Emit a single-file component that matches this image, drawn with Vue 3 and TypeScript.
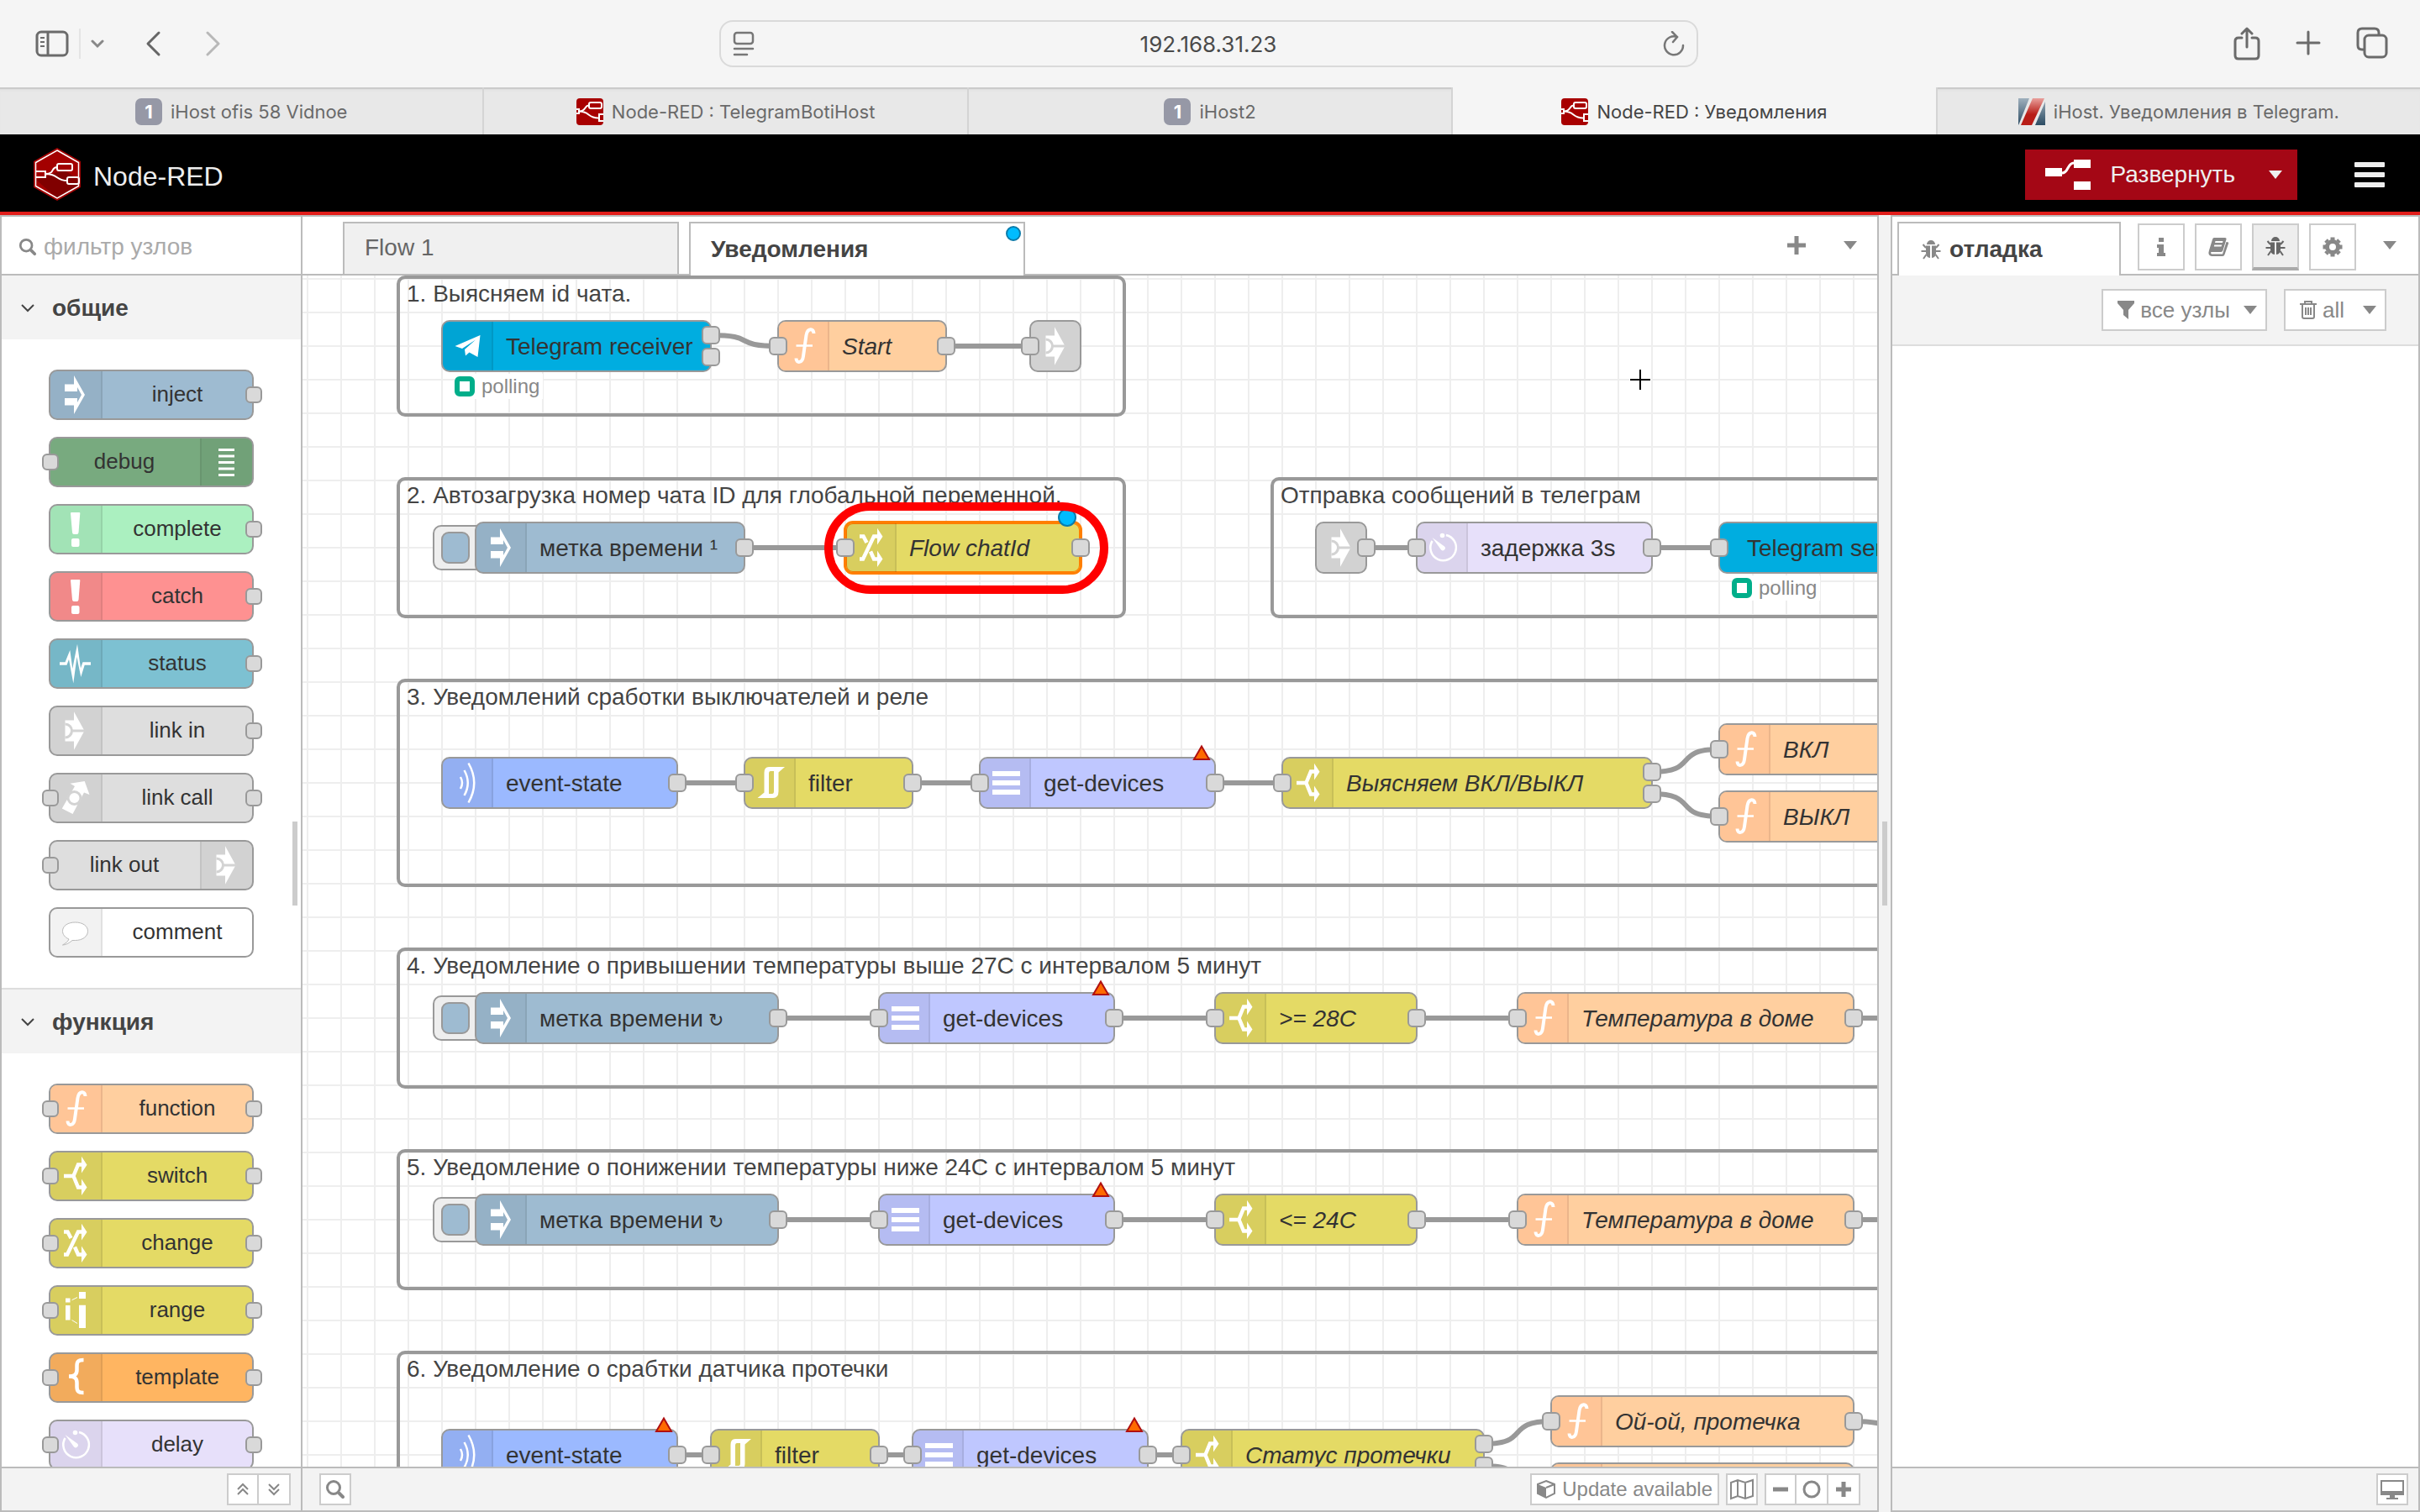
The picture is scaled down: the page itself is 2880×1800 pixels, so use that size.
<script setup lang="ts">
interface BrowserTab {
  title: string
  icon: 'one' | 'red' | 'stripe'
  active?: boolean
}

interface PaletteNode {
  label: string
  icon: string
  kind: string
  input?: boolean
  output?: boolean
  right?: boolean
}

interface Category {
  title: string
  nodes: PaletteNode[]
}

// Positions and spans are counted in grid cells.
interface FlowNode {
  label: string
  mark?: string
  icon?: string
  kind: string
  col: number
  row: number
  span: number
  inputs: number
  outputs: number
  italic?: boolean
  button?: boolean
  error?: boolean
  selected?: boolean
  changed?: boolean
  status?: string
  bare?: boolean
}

interface Group {
  label: string
  left: number
  top: number
  width: number
  height: number
}

const CELL = 40
const ORIGIN_X = 6
const ORIGIN_Y = 4

const browserTabs: BrowserTab[] = [
  { title: 'iHost ofis 58 Vidnoe', icon: 'one' },
  { title: 'Node-RED : TelegramBotiHost', icon: 'red' },
  { title: 'iHost2', icon: 'one' },
  { title: 'Node-RED : Уведомления', icon: 'red', active: true },
  { title: 'iHost. Уведомления в Telegram.', icon: 'stripe' },
]

const categories: Category[] = [
  {
    title: 'общие',
    nodes: [
      { label: 'inject', icon: 'inject', kind: 'inject', output: true },
      { label: 'debug', icon: 'debug', kind: 'debug', input: true, right: true },
      { label: 'complete', icon: 'alert', kind: 'complete', output: true },
      { label: 'catch', icon: 'alert', kind: 'catch', output: true },
      { label: 'status', icon: 'status', kind: 'status', output: true },
      { label: 'link in', icon: 'link', kind: 'link', output: true },
      { label: 'link call', icon: 'linkcall', kind: 'link', input: true, output: true },
      { label: 'link out', icon: 'link', kind: 'link', input: true, right: true },
      { label: 'comment', icon: 'comment', kind: 'comment' },
    ],
  },
  {
    title: 'функция',
    nodes: [
      { label: 'function', icon: 'function', kind: 'function', input: true, output: true },
      { label: 'switch', icon: 'switch', kind: 'logic', input: true, output: true },
      { label: 'change', icon: 'change', kind: 'logic', input: true, output: true },
      { label: 'range', icon: 'range', kind: 'logic', input: true, output: true },
      { label: 'template', icon: 'template', kind: 'template', input: true, output: true },
      { label: 'delay', icon: 'delay', kind: 'delay', input: true, output: true },
    ],
  },
]

const groups: Group[] = [
  { label: '1. Выясняем id чата.', left: 112, top: 0, width: 868, height: 168 },
  { label: '2. Автозагрузка номер чата ID для глобальной переменной.', left: 112, top: 240, width: 868, height: 168 },
  { label: 'Отправка сообщений в телеграм', left: 1152, top: 240, width: 920, height: 168 },
  { label: '3. Уведомлений сработки выключателей и реле', left: 112, top: 480, width: 2400, height: 248 },
  { label: '4. Уведомление о привышении температуры выше 27С с интервалом 5 минут', left: 112, top: 800, width: 2400, height: 168 },
  { label: '5. Уведомление о понижении температуры ниже 24С с интервалом 5 минут', left: 112, top: 1040, width: 2400, height: 168 },
  { label: '6. Уведомление о срабтки датчика протечки', left: 112, top: 1280, width: 2400, height: 248 },
]

const nodes: FlowNode[] = [
  { label: 'Telegram receiver', icon: 'telegram', kind: 'telegram', col: 4, row: 2, span: 8, inputs: 0, outputs: 2, status: 'polling' },
  { label: 'Start', icon: 'function', kind: 'function', col: 14, row: 2, span: 5, inputs: 1, outputs: 1, italic: true },
  { label: '', icon: 'link', kind: 'link', col: 21.5, row: 2, span: 1.5, inputs: 1, outputs: 0, bare: true },
  { label: 'метка времени ¹', icon: 'inject', kind: 'inject', col: 5, row: 8, span: 8, inputs: 0, outputs: 1, button: true },
  { label: 'Flow chatId', icon: 'change', kind: 'logic', col: 16, row: 8, span: 7, inputs: 1, outputs: 1, italic: true, selected: true, changed: true },
  { label: '', icon: 'link', kind: 'link', col: 30, row: 8, span: 1.5, inputs: 0, outputs: 1, bare: true },
  { label: 'задержка 3s', icon: 'delay', kind: 'delay', col: 33, row: 8, span: 7, inputs: 1, outputs: 1 },
  { label: 'Telegram sender', kind: 'telegram', col: 42, row: 8, span: 8, inputs: 1, outputs: 1, status: 'polling' },
  { label: 'event-state', icon: 'waves', kind: 'event', col: 4, row: 15, span: 7, inputs: 0, outputs: 1 },
  { label: 'filter', icon: 'filter', kind: 'logic', col: 13, row: 15, span: 5, inputs: 1, outputs: 1 },
  { label: 'get-devices', icon: 'bars', kind: 'devices', col: 20, row: 15, span: 7, inputs: 1, outputs: 1, error: true },
  { label: 'Выясняем ВКЛ/ВЫКЛ', icon: 'switch', kind: 'logic', col: 29, row: 15, span: 11, inputs: 1, outputs: 2, italic: true },
  { label: 'ВКЛ', icon: 'function', kind: 'function', col: 42, row: 14, span: 6, inputs: 1, outputs: 1, italic: true },
  { label: 'ВЫКЛ', icon: 'function', kind: 'function', col: 42, row: 16, span: 6, inputs: 1, outputs: 1, italic: true },
  { label: 'метка времени', mark: '↻', icon: 'inject', kind: 'inject', col: 5, row: 22, span: 9, inputs: 0, outputs: 1, button: true },
  { label: 'get-devices', icon: 'bars', kind: 'devices', col: 17, row: 22, span: 7, inputs: 1, outputs: 1, error: true },
  { label: '>= 28C', icon: 'switch', kind: 'logic', col: 27, row: 22, span: 6, inputs: 1, outputs: 1, italic: true },
  { label: 'Температура в доме', icon: 'function', kind: 'function', col: 36, row: 22, span: 10, inputs: 1, outputs: 1, italic: true },
  { label: 'метка времени', mark: '↻', icon: 'inject', kind: 'inject', col: 5, row: 28, span: 9, inputs: 0, outputs: 1, button: true },
  { label: 'get-devices', icon: 'bars', kind: 'devices', col: 17, row: 28, span: 7, inputs: 1, outputs: 1, error: true },
  { label: '<= 24C', icon: 'switch', kind: 'logic', col: 27, row: 28, span: 6, inputs: 1, outputs: 1, italic: true },
  { label: 'Температура в доме', icon: 'function', kind: 'function', col: 36, row: 28, span: 10, inputs: 1, outputs: 1, italic: true },
  { label: 'event-state', icon: 'waves', kind: 'event', col: 4, row: 35, span: 7, inputs: 0, outputs: 1, error: true },
  { label: 'filter', icon: 'filter', kind: 'logic', col: 12, row: 35, span: 5, inputs: 1, outputs: 1 },
  { label: 'get-devices', icon: 'bars', kind: 'devices', col: 18, row: 35, span: 7, inputs: 1, outputs: 1, error: true },
  { label: 'Статус протечки', icon: 'switch', kind: 'logic', col: 26, row: 35, span: 9, inputs: 1, outputs: 2, italic: true },
  { label: 'Ой-ой, протечка', icon: 'function', kind: 'function', col: 37, row: 34, span: 9, inputs: 1, outputs: 1, italic: true },
  { label: '', icon: 'function', kind: 'function', col: 37, row: 36, span: 9, inputs: 1, outputs: 1 },
]

// [from column, from row, to column, to row, port shift at the start]
const links: [number, number, number, number, number][] = [
  [12, 2, 14, 2, -13],
  [19, 2, 21.5, 2, 0],
  [13, 8, 16, 8, 0],
  [31.5, 8, 33, 8, 0],
  [40, 8, 42, 8, 0],
  [11, 15, 13, 15, 0],
  [18, 15, 20, 15, 0],
  [27, 15, 29, 15, 0],
  [40, 15, 42, 14, -13],
  [40, 15, 42, 16, 13],
  [14, 22, 17, 22, 0],
  [24, 22, 27, 22, 0],
  [33, 22, 36, 22, 0],
  [46, 22, 50, 22, 0],
  [14, 28, 17, 28, 0],
  [24, 28, 27, 28, 0],
  [33, 28, 36, 28, 0],
  [46, 28, 50, 28, 0],
  [11, 35, 12, 35, 0],
  [17, 35, 18, 35, 0],
  [25, 35, 26, 35, 0],
  [35, 35, 37, 34, -13],
  [35, 35, 37, 36, 13],
  [46, 34, 49, 35, 0],
]

function wire([c1, r1, c2, r2, shift]: [number, number, number, number, number]): string {
  const x1 = ORIGIN_X + c1 * CELL
  const y1 = ORIGIN_Y + r1 * CELL + shift
  const x2 = ORIGIN_X + c2 * CELL
  const y2 = ORIGIN_Y + r2 * CELL
  const bend = (x2 - x1) * 0.7
  return `M${x1} ${y1} C${x1 + bend} ${y1} ${x2 - bend} ${y2} ${x2} ${y2}`
}

function place(n: FlowNode) {
  return {
    left: `${ORIGIN_X + n.col * CELL - 1}px`,
    top: `${ORIGIN_Y + n.row * CELL - 31}px`,
    width: `${n.span * CELL + 2}px`,
  }
}

function placeGroup(g: Group) {
  return { left: `${g.left}px`, top: `${g.top}px`, width: `${g.width}px`, height: `${g.height}px` }
}
</script>

<template>
  <div class="window">
    <svg class="sprite" aria-hidden="true">
      <symbol id="i-inject" viewBox="0 0 60 60"><path fill="#fff" d="M17 17.500H28V7L41 30 28 53V42.500H17V34H32V39L37 30 32 21V26H17Z" /></symbol>
      <symbol id="i-debug" viewBox="0 0 60 60"><path fill="#fff" d="M20 14h19v3H20zM20 21.500h19v3H20zM20 29h19v3H20zM20 36.500h19v3H20zM20 44h19v3H20z" /></symbol>
      <symbol id="i-alert" viewBox="0 0 60 60"><path fill="#fff" d="M24 11q0-1 1-1h9.300q1 0 1 1L33.500 34q-.3 2-2 2h-3.500q-1.700 0-2-2Z" /><rect x="25" y="41" width="9.500" height="10" rx="2" fill="#fff" /></symbol>
      <symbol id="i-status" viewBox="0 0 60 60"><path fill="#fff" d="M11 28.200h6.500L23.300 14l3 22L32 6.700 36 35.500l2.500-7.300H48v3.600h-7.300L36.300 46 33 30 31.500 22 27.300 53.500 22 25 19.500 31.800H11Z" /></symbol>
      <symbol id="i-link" viewBox="0 0 60 60"><path fill="#fff" d="M17.500 17.500H28V7.300L40.500 30 28 52.700V42.500H17.500Z" /><g fill="none" stroke="#d3d3d3" stroke-width="3"><path d="M17.500 22a8 8 0 0 1 0 16" /><path d="M26 30h16" /></g></symbol>
      <symbol id="i-linkcall" viewBox="0 0 60 60"><path fill="#fff" d="M23.500 12.700 40.700 10 46.500 26 40 23.500 26.500 49 13.800 42.500 29 16Z" /><circle cx="28.500" cy="30" r="7.500" fill="#fff" stroke="#d3d3d3" stroke-width="3" /></symbol>
      <symbol id="i-comment" viewBox="0 0 60 60"><path fill="#fff" stroke="#bbb" d="M22 38C17 36 14.500 32 14.500 28.500 14.500 22 21 18 29.500 18S44.500 22 44.500 28.500 38 39.500 29.500 39.500H26C22 43 18 45 14.500 45 18 43 21 41 22 38Z" /></symbol>
      <symbol id="i-function" viewBox="0 0 60 60"><path fill="none" stroke="#fff" stroke-width="4" d="M41.500 15C41.500 8.500 34 8 32.500 17L29 42C28 50.500 20.500 51 20.500 44.500" /><path stroke="#fff" stroke-width="2.500" d="M20.500 29.500H40" /></symbol>
      <symbol id="i-switch" viewBox="0 0 60 60"><path fill="none" stroke="#fff" stroke-width="4.500" d="M16 30H28M27 31 33 16.500H38M27 29 33 43.500H38" /><path fill="#fff" d="M37 6.700 43.500 16.800 37 26.500ZM37 33.500 43.500 43.500 37 53Z" /></symbol>
      <symbol id="i-change" viewBox="0 0 60 60"><path fill="none" stroke="#fff" stroke-width="4.500" d="M16 43.500H20L33 16.500H38M16 16.500H20.500L24.500 24M29 34.500 33 43.500H38" /><path fill="#fff" d="M37 6.700 43.500 16.800 37 26.500ZM37 33.500 43.500 43.500 37 53Z" /></symbol>
      <symbol id="i-range" viewBox="0 0 60 60"><path fill="#fff" d="M18 15.500h5.500v5H18zM18 24h5.500v17.500H18zM34 8h8v8h-8zM34 23.700h8V51h-8z" /><path stroke="#fff" d="M25.500 17.700 32 14.500M25.500 41.500 32 45.500" /></symbol>
      <symbol id="i-template" viewBox="0 0 60 60"><path fill="none" stroke="#fff" stroke-width="4.500" d="M39.500 9C33 9 31.500 11 31.500 16V21C31.500 26 29 28.500 22 28.500 29 28.500 31.500 31 31.500 36V41C31.500 46 33 48 39.500 48" /></symbol>
      <symbol id="i-delay" viewBox="0 0 60 60"><path fill="none" stroke="#fff" stroke-width="2.500" d="M34 15A15.300 15.300 0 1 1 17.500 22" /><circle cx="29.500" cy="15.500" r="2.800" fill="#fff" /><path fill="#fff" d="M17.500 18 32 28.500A2.800 2.800 0 0 1 28 32.500Z" /></symbol>
      <symbol id="i-telegram" viewBox="0 0 60 60"><path fill="#fff" d="M14.500 30 44.500 17 41.500 43 31.500 37.500 27 41.500 26 34 39 22.500 23 33Z" /></symbol>
      <symbol id="i-waves" viewBox="0 0 60 60"><path fill="none" stroke="#fff" stroke-width="2.500" d="M21 23Q25 30 21 37M25.500 15Q34 30 25.500 45M30.500 6.500Q44 30 30.500 53.500" /></symbol>
      <symbol id="i-filter" viewBox="0 0 60 60"><path fill="#fff" fill-rule="evenodd" d="M28 11H47L39.500 17.500V40Q39.500 48 33 48H14.500L22.500 41.500V18Q22.500 11 28 11ZM30 16Q28 16 28 19V43H32Q34 43 34 40V16Z" /></symbol>
      <symbol id="i-bars" viewBox="0 0 60 60"><path fill="#fff" d="M14 16h33v6H14zM14 27h33v6H14zM14 38h33v6H14z" /></symbol>
      <symbol id="i-bug" viewBox="0 0 28 28"><path fill="currentColor" d="M9 8a5 5 0 0 1 10 0ZM8 9.500H13V24C10 24 8 21 8 18ZM15 9.500H20V18C20 21 18 24 15 24Z" /><path fill="none" stroke="currentColor" stroke-width="2" d="M8 12 4.500 8M20 12l3.500-4M8 16H2.500M20 16h5.500M8.500 20 5 25M19.500 20 23 25" /></symbol>
      <symbol id="i-nodes" viewBox="0 0 32 32"><g fill="none" stroke="#fff" stroke-width="2"><rect x="15" y="5" width="15" height="7" rx="2" /><path d="M0 13H3V18H0M3 15.500C12 15.500 9 8.500 15 8.500M3 15.500C16 15.500 13 23.500 26 23.500M33 19H27V27H33" /></g></symbol>
      <symbol id="i-lens" viewBox="0 0 24 24"><circle cx="10" cy="10" r="7.500" fill="none" stroke="currentColor" stroke-width="3" /><path stroke="currentColor" stroke-width="4" stroke-linecap="round" d="M16.500 16.500 21 21" /></symbol>
    </svg>

    <header class="browser">
      <div class="toolbar">
        <div class="tool-left">
          <button class="plain" aria-label="Sidebar"><svg width="40" height="32" viewBox="0 0 40 32" fill="none" stroke="#6b6b6b" stroke-width="3"><rect x="2" y="2" width="36" height="28" rx="5" /><path d="M15 2V30" /><path stroke-width="2" d="M6 9h5M6 14h5M6 19h5" /></svg></button>
          <span class="tool-rule"></span>
          <button class="plain" aria-label="Tab groups"><svg width="16" height="12" viewBox="0 0 16 12" fill="none" stroke="#888" stroke-width="3" stroke-linecap="round"><path d="M2 3 8 9 14 3" /></svg></button>
          <button class="plain back" aria-label="Back"><svg width="20" height="32" viewBox="0 0 20 32" fill="none" stroke="#666" stroke-width="3" stroke-linecap="round" stroke-linejoin="round"><path d="M17 3 4 16 17 29" /></svg></button>
          <button class="plain forward" aria-label="Forward"><svg width="20" height="32" viewBox="0 0 20 32" fill="none" stroke="#b8b8b8" stroke-width="3" stroke-linecap="round" stroke-linejoin="round"><path d="M3 3 16 16 3 29" /></svg></button>
        </div>
        <div class="address">
          <svg width="26" height="30" viewBox="0 0 26 30" fill="none" stroke="#777" stroke-width="2.500" stroke-linecap="round"><rect x="2" y="2" width="22" height="13" rx="3" /><path d="M2 21H24M2 28H17" /></svg>
          <input type="text" value="192.168.31.23" aria-label="Address" />
          <button class="plain" aria-label="Reload"><svg width="26" height="30" viewBox="0 0 26 30" fill="none" stroke="#777" stroke-width="2.500" stroke-linecap="round"><path d="M17 7A11 11 0 1 0 24 17M11 1 17 7 12 13" /></svg></button>
        </div>
        <div class="tool-right">
          <button class="plain" aria-label="Share"><svg width="32" height="40" viewBox="0 0 32 40" fill="none" stroke="#6b6b6b" stroke-width="3" stroke-linecap="round" stroke-linejoin="round"><path d="M10 13H6Q2 13 2 17V34Q2 38 6 38H26Q30 38 30 34V17Q30 13 26 13H22M16 24V3M10 8 16 2 22 8" /></svg></button>
          <button class="plain" aria-label="New tab"><svg width="30" height="40" viewBox="0 0 30 40" stroke="#6b6b6b" stroke-width="3" stroke-linecap="round"><path d="M2 19H28M15 6V32" /></svg></button>
          <button class="plain" aria-label="Tab overview"><svg width="38" height="40" viewBox="0 0 38 40" fill="none" stroke="#6b6b6b" stroke-width="3"><path d="M10 27H7Q2 27 2 22V7Q2 2 7 2H22Q27 2 27 7V10" /><rect x="10" y="10" width="26" height="26" rx="5" /></svg></button>
        </div>
      </div>
      <nav class="browser-tabs">
        <a v-for="t in browserTabs" :key="t.title" href="#" class="browser-tab" :class="{ active: t.active }">
          <span v-if="t.icon === 'one'" class="fav-one">1</span>
          <svg v-else-if="t.icon === 'red'" class="fav-red" width="32" height="32"><use href="#i-nodes" /></svg>
          <svg v-else width="32" height="32" viewBox="0 0 32 32">
            <defs>
              <linearGradient id="stripeBlue" x2="0" y2="1"><stop offset="0" stop-color="#9fb0bd" /><stop offset="1" stop-color="#2c4c63" /></linearGradient>
              <linearGradient id="stripeRed" x2="0" y2="1"><stop offset="0" stop-color="#e9a09c" /><stop offset=".6" stop-color="#b81d17" /></linearGradient>
            </defs>
            <path fill="url(#stripeBlue)" d="M0 0H13L1 30 0 32ZM32 4V32H20Z" /><path fill="url(#stripeRed)" d="M17 0H31L16 32H3Z" />
          </svg>
          <span>{{ t.title }}</span>
        </a>
      </nav>
    </header>

    <div class="app-header">
      <svg width="56" height="64" viewBox="0 0 56 64">
        <path fill="#a30000" d="M28 0 56 16V47L28 63 0 47V16Z" /><path fill="#800000" d="M3 38 28 60 53 46V38L36 26Z" />
        <path fill="none" stroke="#fff" stroke-width="1.500" d="M28 3 53.500 17.500V45.500L28 60 2.500 45.500V17.500Z" />
        <g fill="none" stroke="#fff" stroke-width="2"><rect x="28" y="19" width="18" height="8" rx="2" /><rect x="40" y="35" width="14" height="8" rx="2" /><path d="M2 28H14V35H2M14 31C26 31 20 23 28 23M14 31C30 31 26 39 40 39" /></g>
      </svg>
      <span class="brand">Node-RED</span>
      <div class="deploy">
        <button class="deploy-main"><svg width="54" height="36" viewBox="0 0 54 36" fill="#fff"><path d="M0 10h20v10H0zM34 0h20v10H34zM34 26h20v10H34z" /><path fill="none" stroke="#fff" stroke-width="3" d="M20 16C28 16 26 4 34 4" /></svg><span>Развернуть</span></button>
        <button class="deploy-menu" aria-label="Deploy options"><span class="caret light"></span></button>
      </div>
      <button class="plain menu" aria-label="Menu"><span></span><span></span><span></span></button>
    </div>

    <main class="editor">
      <aside class="palette">
        <label class="search"><svg width="22" height="22"><use href="#i-lens" width="22" height="22" /></svg><input type="text" placeholder="фильтр узлов" /></label>
        <div class="palette-scroll">
          <section v-for="c in categories" :key="c.title" class="category">
            <h3><svg width="18" height="12" viewBox="0 0 18 12" fill="none" stroke="#444" stroke-width="2"><path d="M2 2 9 9 16 2" /></svg>{{ c.title }}</h3>
            <div class="category-nodes">
              <div v-for="n in c.nodes" :key="n.label" class="node palette-node" :class="[n.kind, { right: n.right }]">
                <span class="node-icon"><svg width="60" height="60"><use :href="'#i-' + n.icon" /></svg></span>
                <span class="node-label">{{ n.label }}</span>
                <i v-if="n.input" class="port in"></i>
                <i v-if="n.output" class="port out"></i>
              </div>
            </div>
          </section>
          <div class="thumb"></div>
        </div>
        <footer class="footer palette-footer">
          <div class="joined">
            <button aria-label="Collapse all"><svg width="18" height="18" viewBox="0 0 18 18" fill="none" stroke="#888" stroke-width="2"><path d="M3 9 9 3 15 9M3 15 9 9 15 15" /></svg></button>
            <button aria-label="Expand all"><svg width="18" height="18" viewBox="0 0 18 18" fill="none" stroke="#888" stroke-width="2"><path d="M3 3 9 9 15 3M3 9 9 15 15 9" /></svg></button>
          </div>
        </footer>
      </aside>

      <section class="workspace">
        <div class="tabbar">
          <a href="#" class="tab">Flow 1</a>
          <a href="#" class="tab active">Уведомления<i class="dot tab-dot"></i></a>
          <span class="grow"></span>
          <button class="plain" aria-label="Add flow"><svg width="24" height="24" viewBox="0 0 24 24" stroke="#888" stroke-width="5"><path d="M1 12H23M12 1V23" /></svg></button>
          <button class="plain list" aria-label="List flows"><span class="caret"></span></button>
        </div>
        <div class="canvas">
          <div v-for="g in groups" :key="g.label" class="group" :style="placeGroup(g)">{{ g.label }}</div>
          <svg class="wires"><path v-for="(l, k) in links" :key="k" :d="wire(l)" /></svg>
          <div v-for="(n, k) in nodes" :key="k" class="node flow-node" :class="[n.kind, { italic: n.italic, selected: n.selected, bare: n.bare }]" :style="place(n)">
            <button v-if="n.button" class="trigger" aria-label="Inject"><i></i></button>
            <span class="fill">
              <span v-if="n.icon" class="node-icon"><svg width="60" height="60"><use :href="'#i-' + n.icon" /></svg></span>
              <span class="node-label" :class="{ first: !n.icon }">{{ n.label }}<small v-if="n.mark">&nbsp;{{ n.mark }}</small></span>
            </span>
            <i v-if="n.inputs" class="port in"></i>
            <i v-if="n.outputs === 1" class="port out"></i>
            <template v-if="n.outputs === 2"><i class="port out upper"></i><i class="port out lower"></i></template>
            <svg v-if="n.error" class="error" width="22" height="20" viewBox="0 0 22 20"><path fill="#ff6a00" stroke="#b01010" stroke-width="2" d="M11 2.500 20 18H2Z" /></svg>
            <i v-if="n.changed" class="dot node-dot"></i>
            <span v-if="n.status" class="node-status"><i></i>{{ n.status }}</span>
          </div>
          <div class="highlight"></div>
          <svg class="cursor" width="30" height="30" viewBox="0 0 30 30"><path stroke="#fff" stroke-width="4" d="M2 15H28M15 2V28" /><path stroke="#000" stroke-width="2" d="M3 15H27M15 3V27" /></svg>
        </div>
        <footer class="footer workspace-footer">
          <button class="small" aria-label="Search flows"><svg width="24" height="24"><use href="#i-lens" /></svg></button>
          <span class="grow"></span>
          <button class="small update"><svg width="26" height="24" viewBox="0 0 26 24"><path fill="none" stroke="#888" stroke-width="2" d="M13 2 23 6V17L13 22 3 17V6Z" /><path fill="#888" d="M3 6 13 10V22L3 17Z" /><path fill="none" stroke="#888" stroke-width="2" d="M13 10 23 6" /></svg>Update available</button>
          <button class="small" aria-label="Map"><svg width="30" height="26" viewBox="0 0 30 26" fill="none" stroke="#888" stroke-width="2"><path d="M2 5 10 2 19 5 28 2V21L19 24 10 21 2 24ZM10 2V21M19 5V24" /></svg></button>
          <div class="joined">
            <button aria-label="Zoom out"><svg width="22" height="22" viewBox="0 0 22 22" stroke="#888" stroke-width="5"><path d="M2 11H20" /></svg></button>
            <button aria-label="Reset zoom"><svg width="24" height="24" viewBox="0 0 24 24"><circle cx="12" cy="12" r="9" fill="none" stroke="#888" stroke-width="3" /></svg></button>
            <button aria-label="Zoom in"><svg width="22" height="22" viewBox="0 0 22 22" stroke="#888" stroke-width="5"><path d="M2 11H20M11 2V20" /></svg></button>
          </div>
        </footer>
      </section>

      <div class="separator"><span></span></div>

      <aside class="sidebar">
        <div class="tabbar side-tabbar">
          <a href="#" class="tab side-tab active"><svg width="28" height="28"><use href="#i-bug" /></svg>отладка</a>
          <div class="side-buttons">
            <button aria-label="Info"><svg width="28" height="28" viewBox="0 0 28 28" fill="#888"><path d="M11 3h6v5h-6zM9 11h8v10h2v4H9v-4h2v-6H9z" /></svg></button>
            <button aria-label="Help"><svg width="28" height="28" viewBox="0 0 28 28"><path fill="#888" fill-rule="evenodd" d="M9 3H22Q24 3 23.500 5L19.500 18Q19 20 17 20H6Q4 20.500 6 22.500H19L23.500 8Q27 8 26 10L21.500 23Q21 25 19 25H6Q1 24 3 18L7 5Q7.500 3 9 3ZM10.500 7 10 9H19L19.500 7ZM9.300 11.500 8.800 13.500H17.500L18.300 11.500Z" /></svg></button>
            <button class="on" aria-label="Debug"><svg width="28" height="28"><use href="#i-bug" /></svg></button>
            <button aria-label="Configuration"><svg width="28" height="28" viewBox="0 0 28 28" fill="none" stroke="#888"><circle cx="14" cy="14" r="6.500" stroke-width="5" /><path stroke-width="5" d="M14 2.500V6M14 22v3.500M2.500 14H6M22 14h3.500M6 6 8 8M20 20l2 2M6 22 8 20M20 8 22 6" /></svg></button>
          </div>
          <span class="grow"></span>
          <button class="plain side-list" aria-label="More tabs"><span class="caret"></span></button>
        </div>
        <div class="debug-tools">
          <button><svg width="22" height="24" viewBox="0 0 22 24" fill="#888"><path d="M1 1H21V4L14 12V23L8 18V12L1 4Z" /></svg><span>все узлы</span><span class="caret"></span></button>
          <button class="trash"><svg width="22" height="24" viewBox="0 0 22 24" fill="none" stroke="#888" stroke-width="2"><path d="M1 5H21M7 5V2H15V5M4 6V20Q4 22 6 22H16Q18 22 18 20V6M8 9V18M11 9V18M14 9V18" /></svg><span>all</span><span class="caret"></span></button>
        </div>
        <div class="debug-log"></div>
        <footer class="footer side-footer">
          <button class="small" aria-label="Open in new window"><svg width="30" height="26" viewBox="0 0 30 26"><path fill="none" stroke="#888" stroke-width="2" d="M2 3H28V19H2Z" /><path fill="#888" d="M2 15H28V20H2ZM12 20h6v3h4v2H8v-2h4z" /></svg></button>
        </footer>
      </aside>
    </main>
  </div>
</template>

<style>
body {
  margin: 0;
}
</style>

<style scoped>
.window {
  height: 100vh;
  display: flex;
  flex-direction: column;
  overflow: hidden;
  font-family: "Liberation Sans", Arial, sans-serif;
  font-size: 28px;
  color: #444;
  background: #f3f3f3;
}
.window * {
  box-sizing: border-box;
}
.sprite {
  position: absolute;
  width: 0;
  height: 0;
}
svg {
  display: block;
  flex: none;
}
a {
  color: inherit;
  text-decoration: none;
}
button {
  font: inherit;
  color: inherit;
  border: 0;
  margin: 0;
  padding: 0;
  display: flex;
  align-items: center;
  justify-content: center;
}
.plain {
  background: none;
}
.grow {
  flex: 1;
}

/* Browser chrome */
.browser {
  flex: none;
  background: #f5f5f5;
  font-family: Inter, "Noto Sans", sans-serif;
}
.toolbar {
  height: 104px;
  display: flex;
  align-items: center;
}
.tool-left,
.tool-right {
  flex: 1;
  display: flex;
  align-items: center;
}
.tool-left {
  padding-left: 42px;
}
.tool-rule {
  width: 2px;
  height: 36px;
  margin: 0 12px;
  background: #e4e4e4;
}
.back {
  margin-left: 48px;
}
.forward {
  margin-left: 52px;
}
.tool-right {
  justify-content: flex-end;
  gap: 42px;
  padding-right: 38px;
}
.address {
  width: 1165px;
  height: 56px;
  margin-right: 8px;
  padding: 0 14px;
  display: flex;
  align-items: center;
  border: 2px solid #dadada;
  border-radius: 16px;
}
.address input {
  flex: 1;
  min-width: 0;
  border: 0;
  background: none;
  text-align: center;
  font: inherit;
  font-size: 26px;
  color: #4a4a4a;
}
.browser-tabs {
  height: 56px;
  display: flex;
}
.browser-tab {
  flex: 1;
  display: flex;
  align-items: center;
  justify-content: center;
  gap: 10px;
  padding-top: 2px;
  border-right: 2px solid #d4d4d4;
  background: #e8e8e8;
  box-shadow: inset 0 2px 0 #cbcbcb, inset 0 5px 3px -2px #dcdcdc;
  font-size: 22px;
  color: #6a6a6a;
  white-space: nowrap;
}
.browser-tab:last-child {
  border-right: 0;
}
.browser-tab.active {
  background: #f5f5f5;
  box-shadow: none;
  color: #444;
}
.fav-one {
  width: 32px;
  height: 32px;
  border-radius: 7px;
  background: #9698a6;
  color: #fff;
  font-weight: 700;
  line-height: 32px;
  text-align: center;
}
.fav-red {
  background: #a80000;
  border-radius: 4px;
}

/* Application header */
.app-header {
  flex: none;
  height: 96px;
  padding: 4px 42px 0 40px;
  display: flex;
  align-items: center;
  background: #000;
  border-bottom: 4px solid #e11d1a;
  color: #eee;
}
.brand {
  flex: 1;
  margin-left: 15px;
  padding-top: 4px;
  font-size: 32px;
  line-height: 40px;
}
.deploy {
  height: 60px;
  display: flex;
  background: #a40715;
}
.deploy button {
  background: none;
  color: #eee;
}
.deploy-main {
  padding-left: 24px;
  gap: 24px;
}
.deploy-menu {
  width: 48px;
  margin-left: 24px;
  margin-right: 2px;
}
.menu {
  width: 36px;
  margin-left: 68px;
  flex-direction: column;
  gap: 6px;
}
.menu span {
  width: 36px;
  height: 6px;
  border-radius: 1px;
  background: #eee;
}
.caret {
  border: 8px solid transparent;
  border-top: 10px solid #888;
  border-bottom: 0;
}
.caret.light {
  border-top-color: #eee;
}

/* Editor columns */
.editor {
  flex: 1;
  min-height: 0;
  display: flex;
}
.palette,
.workspace,
.sidebar {
  display: flex;
  flex-direction: column;
  background: #fff;
  border: 2px solid #bbb;
}
.palette {
  width: 360px;
  flex: none;
}
.workspace {
  flex: 1;
  min-width: 0;
  border-left: 0;
}
.separator {
  width: 14px;
  flex: none;
  display: flex;
  align-items: center;
  justify-content: center;
  background: #f3f3f3;
}
.separator span {
  width: 6px;
  height: 100px;
  background: #ccc;
}
.sidebar {
  width: 630px;
  flex: none;
}

/* Palette */
.search {
  height: 70px;
  flex: none;
  display: flex;
  align-items: center;
  gap: 8px;
  padding: 4px 0 0 20px;
  border-bottom: 2px solid #bbb;
  color: #888;
}
.search input {
  flex: 1;
  min-width: 0;
  padding: 0;
  border: 0;
  background: none;
  font: inherit;
}
.search input::placeholder {
  color: #aaa;
  opacity: 1;
}
.palette-scroll {
  position: relative;
  flex: 1;
  min-height: 0;
  overflow: hidden;
}
.category h3 {
  height: 76px;
  margin: 0;
  padding: 2px 0 0 22px;
  display: flex;
  align-items: center;
  gap: 20px;
  background: #f3f3f3;
  font-size: 28px;
}
.category + .category {
  border-top: 2px solid #ddd;
}
.category-nodes {
  display: flex;
  flex-direction: column;
  gap: 20px;
  padding: 36px 0 36px 56px;
}
.thumb {
  position: absolute;
  top: 650px;
  right: 4px;
  width: 6px;
  height: 100px;
  background: #ccc;
}

/* Nodes */
.node {
  position: relative;
  display: flex;
  border: 2px solid #999;
  border-radius: 10px;
  color: #333;
  white-space: nowrap;
}
.palette-node {
  width: 244px;
  height: 60px;
  font-size: 26px;
}
.palette-node.right {
  flex-direction: row-reverse;
}
.node-icon {
  width: 62px;
  flex: none;
  display: flex;
  align-items: center;
  border-right: 2px solid rgba(0, 0, 0, 0.08);
  border-radius: 8px 0 0 8px;
  background: rgba(0, 0, 0, 0.05);
}
.right .node-icon {
  border-right: 0;
  border-left: 2px solid rgba(0, 0, 0, 0.08);
  border-radius: 0 8px 8px 0;
}
.palette-node .node-label {
  flex: 1;
  line-height: 54px;
  text-align: center;
}
.palette-node.right .node-label {
  padding-right: 2px;
}
.port {
  position: absolute;
  top: 50%;
  width: 20px;
  height: 20px;
  margin-top: -10px;
  border: 2px solid #999;
  border-radius: 6px;
  background: #d9d9d9;
}
.port.in {
  left: -10px;
}
.port.out {
  right: -12px;
}
.flow-node {
  position: absolute;
  height: 62px;
  isolation: isolate;
}
.flow-node .fill {
  flex: 1;
  min-width: 0;
  display: flex;
}
.flow-node .node-icon {
  width: 60px;
}
.flow-node .node-label {
  padding-left: 15px;
  line-height: 60px;
}
.flow-node .node-label.first {
  padding-left: 32px;
}
.node-label small {
  font-size: 22px;
}
.italic .node-label {
  font-style: italic;
}
.flow-node .port {
  width: 22px;
  height: 22px;
  margin-top: -11px;
}
.flow-node .port.in {
  left: -12px;
}
.flow-node .port.upper {
  margin-top: -24px;
}
.flow-node .port.lower {
  margin-top: 2px;
}
.bare .node-icon {
  width: 58px;
  border: 0;
  border-radius: 8px;
}
.bare .node-label {
  display: none;
}
.selected {
  border-color: #ff7f00;
  box-shadow: inset 0 0 0 1px #ff7f00, 0 0 0 1px #ff7f00;
}
.inject, .inject .trigger i { background: #9ebbd1; }
.debug { background: #78aa7f; }
.complete { background: #abf0c0; }
.catch { background: #fe9191; }
.status { background: #7dc1d2; }
.link { background: #dedede; }
.comment { background: #fff; }
.function { background: #ffcf9f; }
.function .node-icon { background: #ffc597; }
.logic { background: #e4da65; }
.template { background: #ffb561; }
.delay { background: #e7e0fa; }
.telegram { background: #00ade0; }
.event { background: #9bb9ff; }
.devices { background: #bfc7ff; }
.trigger {
  position: absolute;
  z-index: -1;
  left: -50px;
  top: 4px;
  width: 64px;
  height: 54px;
  justify-content: flex-start;
  padding-left: 8px;
  border: 2px solid #999;
  border-radius: 10px;
  background: #eee;
}
.trigger i {
  width: 34px;
  height: 38px;
  border: 2px solid #999;
  border-radius: 9px;
}
.error {
  position: absolute;
  top: -17px;
  right: 4px;
}
.dot {
  position: absolute;
  border: 2px solid #0b7cab;
  border-radius: 50%;
  background: #00bcff;
}
.node-dot {
  top: -18px;
  right: 4px;
  width: 22px;
  height: 22px;
}
.node-status {
  position: absolute;
  left: 14px;
  top: 62px;
  display: flex;
  align-items: center;
  gap: 8px;
  padding-right: 4px;
  background: #fff;
  font-size: 24px;
  line-height: 30px;
  color: #888;
}
.node-status i {
  width: 24px;
  height: 24px;
  border: 6px solid #00ae8a;
  border-radius: 6px;
  background: #fff;
}

/* Workspace */
.tabbar {
  height: 70px;
  flex: none;
  display: flex;
  align-items: flex-end;
  padding-left: 48px;
  border-bottom: 2px solid #bbb;
}
.tab {
  position: relative;
  width: 400px;
  height: 62px;
  margin-right: 12px;
  padding: 0 0 2px 24px;
  display: flex;
  align-items: center;
  border: 2px solid #bbb;
  border-bottom: 0;
  background: #f0f0f0;
  color: #666;
}
.tab.active {
  height: 64px;
  margin-bottom: -2px;
  margin-right: 0;
  padding-bottom: 0;
  background: #fff;
  font-weight: 700;
  color: #444;
}
.tab-dot {
  top: 3px;
  right: 3px;
  width: 18px;
  height: 18px;
}
.tabbar .plain {
  height: 68px;
}
.list {
  width: 64px;
  margin-left: 20px;
}
.canvas {
  position: relative;
  z-index: 0;
  flex: 1;
  min-height: 0;
  overflow: hidden;
  background: linear-gradient(#eee 2px, transparent 2px) 5px 3px / 40px 40px,
    linear-gradient(90deg, #eee 2px, transparent 2px) 5px 3px / 40px 40px, #fff;
}
.group {
  position: absolute;
  padding: 2px 0 0 8px;
  border: 4px solid #999;
  border-radius: 10px;
  line-height: 32px;
  white-space: nowrap;
  color: #444;
}
.wires {
  position: absolute;
  inset: 0;
  width: 100%;
  height: 100%;
  fill: none;
  stroke: #999;
  stroke-width: 6px;
}
.flow-node:has(.trigger) {
  background: none;
  border: 0;
}
.flow-node:has(.trigger) .fill {
  border: 2px solid #999;
  border-radius: 10px;
  background: #9ebbd1;
}
.flow-node:has(.trigger) .port.out {
  right: -10px;
}
.highlight {
  position: absolute;
  left: 621px;
  top: 270px;
  width: 338px;
  height: 109px;
  border: 10px solid #f00;
  border-radius: 55px;
}
.cursor {
  position: absolute;
  left: 1577px;
  top: 109px;
}

/* Footers */
.footer {
  height: 52px;
  flex: none;
  display: flex;
  align-items: center;
  border-top: 2px solid #bbb;
  background: #f3f3f3;
  color: #888;
}
.palette-footer {
  justify-content: flex-end;
  padding-right: 12px;
}
.workspace-footer {
  gap: 8px;
  padding: 0 20px;
}
.side-footer {
  justify-content: flex-end;
  padding-right: 12px;
}
.joined {
  display: flex;
}
.joined button,
.small {
  width: 38px;
  height: 38px;
  border: 2px solid #ccc;
  background: #fff;
}
.joined button + button {
  border-left: 0;
}
.small.update {
  width: auto;
  padding: 0 6px 0 4px;
  gap: 6px;
  font-size: 24px;
}

/* Sidebar */
.side-tabbar {
  padding-left: 6px;
}
.side-tab {
  width: 266px;
  gap: 8px;
}
.side-tab svg {
  color: #888;
}
.side-buttons {
  display: flex;
  gap: 12px;
  margin: 0 0 4px 20px;
}
.side-buttons button {
  width: 56px;
  height: 56px;
  border: 2px solid #ccc;
  background: #fff;
}
.side-buttons .on {
  border-bottom: 4px solid #aaa;
  background: #eee;
  color: #666;
}
.side-list {
  width: 68px;
}
.debug-tools {
  height: 84px;
  flex: none;
  display: flex;
  align-items: center;
  justify-content: flex-end;
  gap: 20px;
  padding-right: 38px;
  border-bottom: 2px solid #ddd;
  background: #f3f3f3;
  font-size: 26px;
  color: #888;
}
.debug-tools button {
  height: 50px;
  padding: 0 10px 0 16px;
  border: 2px solid #ccc;
  background: #fff;
}
.debug-tools svg {
  margin-right: 6px;
}
.debug-tools .caret {
  margin-left: 16px;
}
.debug-tools .trash .caret {
  margin-left: 22px;
}
.debug-log {
  flex: 1;
}
</style>
